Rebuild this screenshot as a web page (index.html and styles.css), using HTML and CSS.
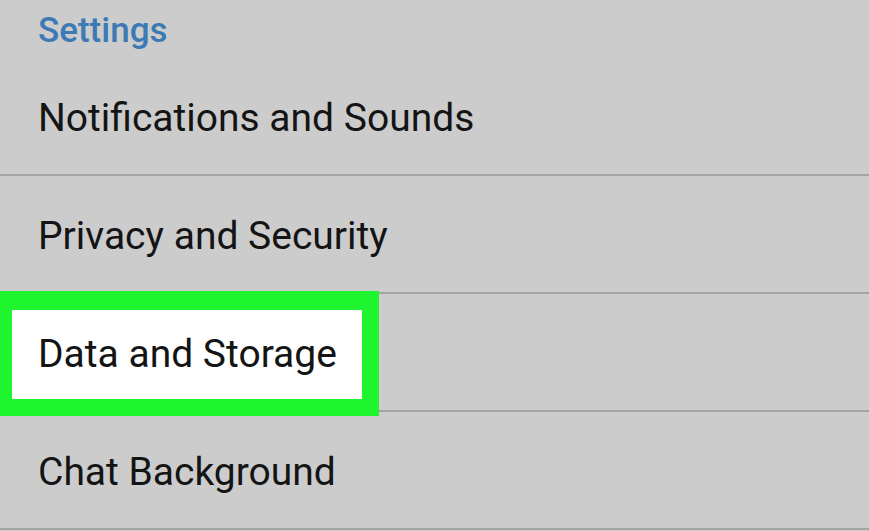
FILE: index.html
```html
<!DOCTYPE html>
<html>
<head>
<meta charset="utf-8">
<link rel="stylesheet" href="styles.css">
</head>
<body>
<div class="screen">
  <div class="header">Settings</div>
  <div class="row"><span class="label">Notifications and Sounds</span></div>
  <div class="row"><span class="label">Privacy and Security</span></div>
  <div class="row highlighted">
    <div class="highlight"></div>
    <span class="label">Data and Storage</span>
  </div>
  <div class="row"><span class="label">Chat Background</span></div>
</div>
</body>
</html>
```

FILE: styles.css
```css
html, body {
  margin: 0;
  padding: 0;
  background: #cccccc;
}
.screen {
  width: 869px;
  height: 531px;
  overflow: hidden;
  background: #cccccc;
  font-family: Roboto, "Liberation Sans", sans-serif;
}
.header {
  height: 58px;
  padding-left: 38px;
  box-sizing: border-box;
  padding-top: 10px;
  font-size: 35px;
  font-weight: 500;
  color: #3b7ab5;
  line-height: 42px;
}
.row {
  position: relative;
  height: 118px;
  box-sizing: border-box;
  border-bottom: 2px solid #a4a4a4;
  display: flex;
  align-items: center;
  padding-left: 38px;
  padding-top: 4px;
}
.label {
  position: relative;
  font-size: 39px;
  color: #141414;
  line-height: 46px;
  z-index: 1;
}
.highlight {
  position: absolute;
  left: 0;
  top: -3px;
  width: 379px;
  height: 125px;
  box-sizing: border-box;
  background: #ffffff;
  border-style: solid;
  border-color: #1ef52e;
  border-width: 19px 17px 17px 12px;
}
```
